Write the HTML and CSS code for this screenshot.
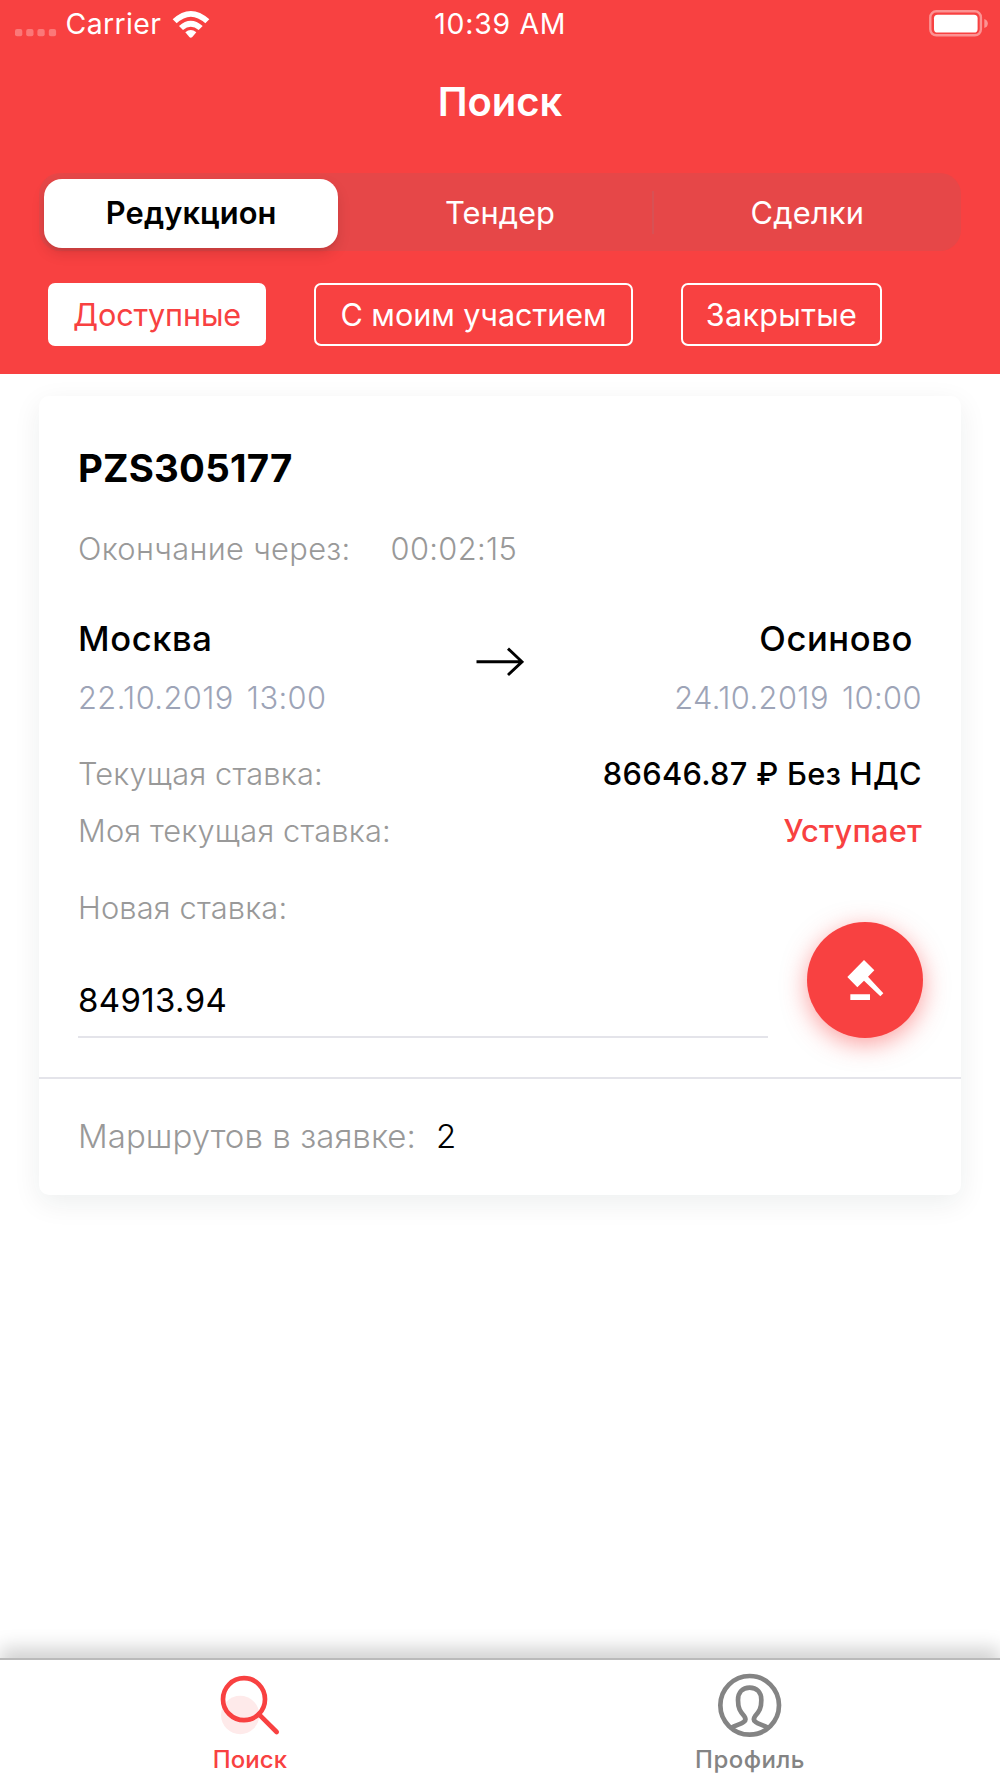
FILE: index.html
```
<!DOCTYPE html>
<html lang="ru">
<head>
<meta charset="utf-8">
<title>Поиск</title>
<link rel="stylesheet" href="styles.css">
</head>
<body>
<div class="screen">
  <header class="header">
    <div class="status">
      <div class="status-left">
        <svg class="signal" viewBox="0 0 42 8"><rect x="0" width="7.3" height="7.3" rx="2"/><rect x="11.2" width="7.3" height="7.3" rx="2"/><rect x="22.4" width="7.3" height="7.3" rx="2"/><rect x="33.8" width="7.3" height="7.3" rx="2"/></svg>
        <span class="carrier">Carrier</span>
        <svg class="wifi" viewBox="516 28 114 84"><path d="M518 56Q572 6 628 56L616 68Q572 28 530 68Z"/><path d="M537 76Q572 44 608 76L596 88Q572 68 549 88Z"/><path d="M556 95Q572 81 589 95L577 109Q572 113 568 109Z"/></svg>
      </div>
      <span class="clock">10:39 AM</span>
      <svg class="battery" viewBox="0 0 60 28"><rect class="battery-shell" x="1.3" y="1.3" width="50.6" height="24" rx="6"/><rect x="5" y="4.7" width="43.6" height="17.8" rx="3.6"/><path class="battery-cap" d="M55.3 9Q58.8 10 58.8 13.5Q58.8 17 55.3 18Z"/></svg>
    </div>
    <h1 class="title">Поиск</h1>
    <nav class="segments">
      <span class="segment segment-active">Редукцион</span>
      <span class="segment segment-tender">Тендер</span>
      <span class="segment segment-deals">Сделки</span>
    </nav>
    <div class="chips">
      <span class="chip chip-active">Доступные</span>
      <span class="chip chip-mine">С моим участием</span>
      <span class="chip chip-closed">Закрытые</span>
    </div>
  </header>

  <main class="content">
    <article class="card">
      <div class="card-body">
        <h2 class="number">PZS305177</h2>
        <div class="timer"><span class="timer-label">Окончание через:</span><span>00:02:15</span></div>
        <div class="route">
          <div class="stop">
            <span class="city">Москва</span>
            <span class="date">22.10.2019 13:00</span>
          </div>
          <svg class="arrow" viewBox="0 0 48 30"><path d="M.5 14.8H46M32 1.6L46 14.8L32 28"/></svg>
          <div class="stop stop-end">
            <span class="city city-end">Осиново</span>
            <span class="date">24.10.2019 10:00</span>
          </div>
        </div>
        <div class="row row-price"><span class="label">Текущая ставка:</span><span class="price">86646.87 ₽ Без НДС</span></div>
        <div class="row row-mine"><span class="label">Моя текущая ставка:</span><span class="losing">Уступает</span></div>
        <div class="bid">
          <div class="field">
            <span class="label">Новая ставка:</span>
            <span class="value">84913.94</span>
          </div>
          <span class="fab"><svg viewBox="320 185 348 348"><path d="M491 299L522 330L503 349L549 399L540 408L491 361L471 381L441 350ZM450 402H509V419H450Z"/></svg></span>
        </div>
      </div>
      <footer class="card-footer"><span class="routes-label">Маршрутов в заявке:</span><span class="routes">2</span></footer>
    </article>
  </main>

  <nav class="tabs">
    <span class="tab tab-active">
      <svg viewBox="114 99 192 192"><circle class="glow" cx="180.500" cy="225" r="57.500"/><circle class="line" cx="192" cy="177.500" r="63"/><path class="line" d="M237 223L290 276"/></svg>
      <span class="tab-label">Поиск</span>
    </span>
    <span class="tab">
      <svg viewBox="114 99 192 192"><circle class="line" cx="209" cy="196" r="88"/><path class="line" d="M154 263C168 255 184 252 192 245Q200 239 193 229C180 214 174 205 174 180C174 156 188 143 209 143C230 143 244 156 244 180C244 205 238 214 225 229Q218 239 226 245C234 252 250 255 264 263"/></svg>
      <span class="tab-label tab-label-profile">Профиль</span>
    </span>
  </nav>
</div>
</body>
</html>
```
FILE: styles.css
```
* { box-sizing: border-box; }
body { margin: 0; font-family: Inter, "Liberation Sans", sans-serif; background: #fff; color: #000; }
svg { display: block; flex: none; }
.screen { width: 1000px; height: 1778px; display: flex; flex-direction: column; overflow: hidden; white-space: nowrap; }

.header { height: 374px; background: #f84141; color: #fff; flex: none; }
.status { height: 48px; display: grid; grid-template-columns: 1fr auto 1fr; padding: 0 11px 0 14.5px; font-size: 28.4px; line-height: 48px; }
.status-left { display: flex; }
.signal { width: 42px; height: 8px; margin: 29px 9px 0 0; fill: #fb7878; }
.carrier { letter-spacing: .4px; }
.wifi { width: 38px; height: 28px; margin: 9.500px 0 0 11px; fill: #fff; }
.clock { letter-spacing: .75px; margin-right: 3px; }
.battery { width: 60px; height: 28px; margin-top: 10px; justify-self: end; fill: #fff; }
.battery-shell { fill: none; stroke: #fc9393; stroke-width: 2.4px; }
.battery-cap { fill: #fc9393; }
.title { margin: 0; height: 109px; line-height: 108px; font-size: 40px; font-weight: 600; text-align: center; }
.segments { margin: 16px 39px 0; height: 78px; border-radius: 21px; background: #e64748; display: grid; grid-template-columns: repeat(3, 1fr); font-size: 30.8px; font-weight: 400; line-height: 80px; text-align: center; }
.segment-active { margin: 6px 8px 5px 5px; line-height: 68px; border-radius: 18px; background: #fff; color: #000; font-weight: 600; letter-spacing: .1px; box-shadow: 0 6px 14px rgba(0,0,0,.11), 0 3px 3px rgba(0,0,0,.05); }
.segment-tender { background: linear-gradient(#d75154, #d75154) right 18px / 2px 43px no-repeat; }
.segment-deals { letter-spacing: .2px; }
.chips { display: flex; gap: 48px; margin: 32px 0 0 48px; font-size: 30.6px; font-weight: 400; }
.chip { height: 63px; width: 218px; line-height: 60px; border: 2px solid #fff; border-radius: 7px; text-align: center; letter-spacing: -.15px; }
.chip-active { background: #fff; color: #f84141; }
.chip-mine { width: 319px; letter-spacing: -.05px; }
.chip-closed { width: 201px; letter-spacing: .3px; }

.content { flex: 1; padding: 22px 39px 0; }
.card { border-radius: 10px; background: #fff; box-shadow: 0 8px 28px rgba(20,40,34,.075); }
.card-body { padding: 44px 39px 39px; border-bottom: 2px solid #e4e4ea; }
.number { margin: 0; font-size: 38.400px; line-height: 56px; font-weight: 700; letter-spacing: .2px; }
.timer { display: flex; gap: 40px; margin-top: 22px; font-size: 30.8px; line-height: 62px; font-weight: 300; letter-spacing: .33px; color: #999; }
.route { display: grid; grid-template-columns: 1fr 48px 1fr; margin-top: 34px; }
.stop { display: flex; flex-direction: column; gap: 10px; }
.stop-end { align-items: flex-end; }
.city { font-size: 34.6px; line-height: 48px; font-weight: 500; letter-spacing: .6px; }
.city-end { padding-right: 9px; }
.date { font-size: 30.8px; line-height: 51px; font-weight: 300; letter-spacing: .43px; word-spacing: 4px; color: #9da4b7; }
.arrow { width: 48px; height: 30px; margin-top: 33px; fill: none; stroke: #000; stroke-width: 2.9px; }
.row { display: flex; justify-content: space-between; font-size: 30.8px; line-height: 50px; }
.row-price { margin-top: 26px; }
.row-mine { margin-top: 7px; }
.label { font-size: 30.8px; line-height: 50px; font-weight: 300; letter-spacing: .15px; color: #999; }
.price { font-weight: 500; letter-spacing: .3px; }
.losing { font-weight: 500; letter-spacing: .2px; color: #f84141; }
.bid { display: flex; justify-content: space-between; align-items: flex-end; margin: 27px -1px 0 0; }
.field { width: 690px; display: flex; flex-direction: column; border-bottom: 2px solid #e4e4ea; padding-bottom: 11px; }
.value { margin-top: 42px; font-size: 33px; line-height: 50px; letter-spacing: .36px; }
.fab { width: 116px; height: 116px; border-radius: 50%; background: #f84141; box-shadow: 0 6px 24px rgba(249,65,65,.5); }
.fab svg { width: 116px; height: 116px; fill: #fff; }
.card-footer { display: flex; gap: 20px; height: 116px; padding-left: 39px; line-height: 114px; font-size: 33px; }
.routes-label { font-weight: 300; letter-spacing: .05px; color: #999; }
.routes { font-weight: 300; }

.tabs { flex: none; height: 120px; border-top: 2px solid #bababa; background: #fff; display: grid; grid-template-columns: 1fr 1fr; box-shadow: 0 -10px 18px rgba(0,0,0,.18); }
.tab { display: flex; flex-direction: column; align-items: center; padding-top: 13px; color: #848484; }
.tab-active { color: #f84141; }
.tab svg { width: 64px; height: 64px; }
.line { fill: none; stroke: currentColor; stroke-width: 14px; stroke-linecap: round; stroke-linejoin: round; }
.glow { fill: #feeaea; }
.tab-label { margin-top: 8px; font-size: 24px; line-height: 29px; font-weight: 500; letter-spacing: .1px; }
.tab-label-profile { letter-spacing: .45px; }
```
